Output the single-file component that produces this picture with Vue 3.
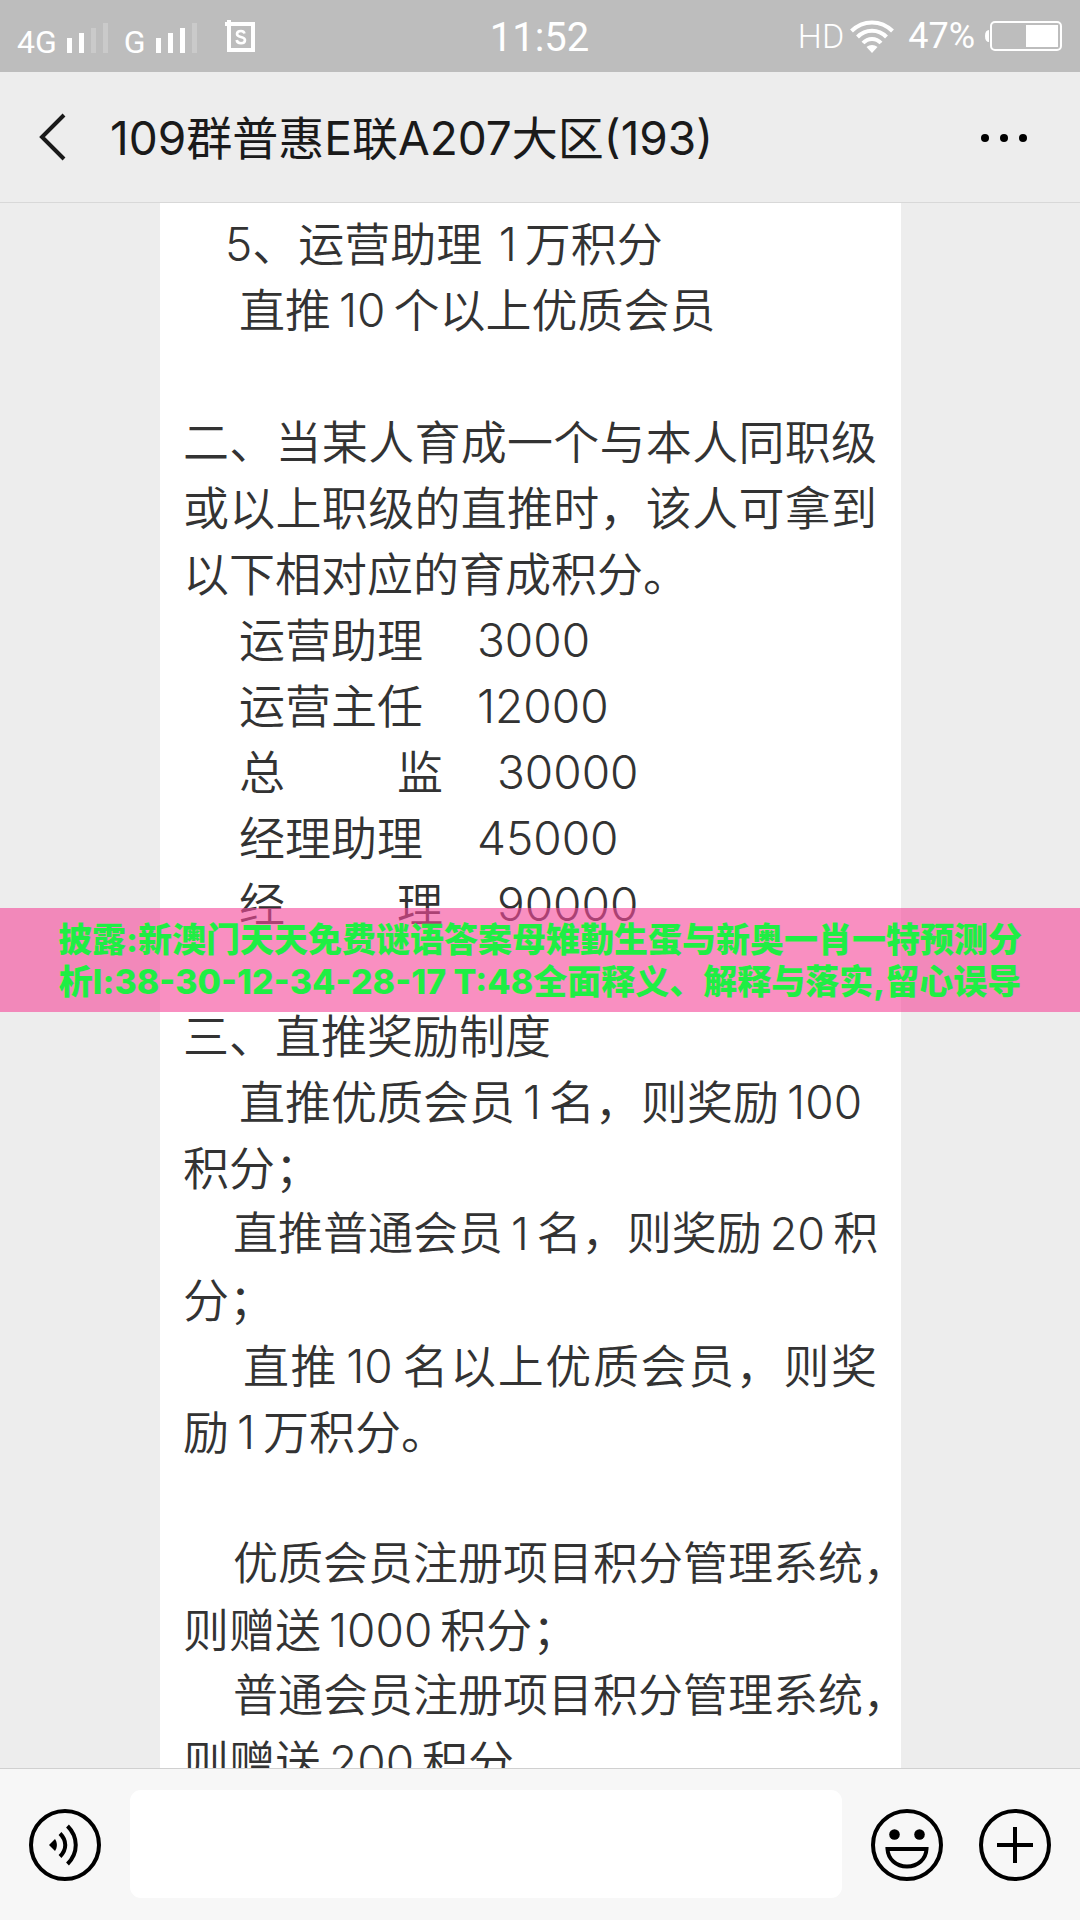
<script setup>
import { ref } from 'vue'

const message = ref('')

// full: 两端对齐的整行；tight: 字号略小的行
const intro = [
  { text: '5、运营助理\u20091万积分', indent: 'indent-1' },
  { text: '直推10个以上优质会员', indent: 'indent-3' },
  { text: '' },
  { text: '二、当某人育成一个与本人同职级', full: true },
  { text: '或以上职级的直推时，该人可拿到', full: true },
  { text: '以下相对应的育成积分。' }
]

const roles = [
  { name: ['运营助理'], score: 3000 },
  { name: ['运营主任'], score: 12000 },
  { name: ['总', '监'], score: 30000 },
  { name: ['经理助理'], score: 45000 },
  { name: ['经', '理'], score: 90000 }
]

const rules = [
  { text: '' },
  { text: '三、直推奖励制度' },
  { text: '直推优质会员1名，则奖励100', indent: 'indent-3' },
  { text: '积分；' },
  { text: '直推普通会员1名，则奖励20积', indent: 'indent-2', full: true, tight: true },
  { text: '分；' },
  { text: '直推10名以上优质会员，则奖', indent: 'indent-4', full: true },
  { text: '励1万积分。' },
  { text: '' },
  { text: '优质会员注册项目积分管理系统，', indent: 'indent-2', tight: true },
  { text: '则赠送1000积分；' },
  { text: '普通会员注册项目积分管理系统，', indent: 'indent-2', tight: true },
  { text: '则赠送200积分。' }
]

// 把数字拆出来，和汉字之间留一点空隙
const split = (text) => text.split(/(\d+)/).filter(Boolean)
const isNum = (part) => /^\d+$/.test(part)
const lineClass = (line) => [line.indent, { full: line.full, tight: line.tight }]
</script>

<template>
  <div class="phone">
    <div class="status">
      <div class="status-left">
        <span class="net">4G</span>
        <svg class="bars" width="41" height="30" viewBox="0 0 41 30" fill="#fff">
          <rect x="0" y="15" width="5" height="15" />
          <rect x="12" y="10" width="5" height="20" />
          <rect x="24" y="5" width="5" height="25" opacity=".2" />
          <rect x="36" y="0" width="5" height="30" opacity=".2" />
        </svg>
        <span class="net">G</span>
        <svg class="bars" width="41" height="30" viewBox="0 0 41 30" fill="#fff">
          <rect x="0" y="15" width="5" height="15" />
          <rect x="12" y="10" width="5" height="20" />
          <rect x="24" y="5" width="5" height="25" />
          <rect x="36" y="0" width="5" height="30" opacity=".2" />
        </svg>
        <svg class="shot" width="30" height="33" viewBox="0 0 30 33" fill="none" stroke="#fff">
          <path d="M4 4h24v26H4z" stroke-width="4" />
          <path d="M0 4h4M4 0v4" stroke-width="4" />
          <path d="M19.500 13.500C19 11.500 17.500 11 16 11c-2.500 0-4 1.200-4 3 0 4 8 1.800 8 6 0 2-1.800 3.200-4 3.200s-4-1-4.300-3.200" stroke-width="2.600" />
        </svg>
      </div>
      <div class="clock">11:52</div>
      <div class="status-right">
        <span class="hd">HD</span>
        <svg class="wifi" width="44" height="33" viewBox="0 0 44 33" fill="none" stroke="#fff" stroke-width="4">
          <path d="M1.500 11C13-.5 31-.5 42.500 11" />
          <path d="M7.500 17c8-8.300 21-8.300 29 0" />
          <path d="M13 23c5-5.500 13-5.500 18 0" />
          <path d="M22 33l-5.500-6c3-2.800 8-2.800 11 0z" fill="#fff" stroke="none" />
        </svg>
        <span class="percent">47%</span>
        <svg class="battery" width="77" height="30" viewBox="0 0 77 30">
          <path d="M4 9C1.500 9 0 11 0 15s1.500 6 4 6z" fill="#fff" />
          <rect x="6" y="1" width="70" height="28" rx="4" fill="none" stroke="#fff" stroke-width="2" />
          <rect x="41" y="4" width="32" height="22" fill="#fff" />
        </svg>
      </div>
    </div>

    <header class="header">
      <button class="icon-btn back" aria-label="返回">
        <svg width="28" height="48" viewBox="0 0 28 48" fill="none" stroke="#1a1a1a" stroke-width="4">
          <path d="M26 2L4 24l22 22" />
        </svg>
      </button>
      <h1 class="title">109群普惠E联A207大区(193)</h1>
      <button class="icon-btn" aria-label="更多">
        <svg width="48" height="10" viewBox="0 0 48 10">
          <circle cx="5" cy="6" r="4" />
          <circle cx="24" cy="6" r="4" />
          <circle cx="43" cy="6" r="4" />
        </svg>
      </button>
    </header>

    <main class="chat">
      <article class="paper">
        <p v-for="(line, i) in intro" :key="'a' + i" class="line" :class="lineClass(line)">
          <span v-for="(part, j) in split(line.text)" :key="j" :class="{ num: isNum(part) && j > 0 }">{{ part }}</span>
        </p>
        <p v-for="(role, i) in roles" :key="'b' + i" class="line role">
          <span class="role-name" :class="{ spread: role.name.length > 1 }">
            <span v-for="word in role.name" :key="word">{{ word }}</span>
          </span>
          <span>{{ role.score }}</span>
        </p>
        <p v-for="(line, i) in rules" :key="'c' + i" class="line" :class="lineClass(line)">
          <span v-for="(part, j) in split(line.text)" :key="j" :class="{ num: isNum(part) }">{{ part }}</span>
        </p>
      </article>
      <div class="banner">
        披露:新澳门天天免费谜语答案母雉勤生蛋与新奥一肖一特预测分<br />
        析l:38-30-12-34-28-17 T:48全面释义、解释与落实,留心误导
      </div>
    </main>

    <footer class="footer">
      <button class="icon-btn" aria-label="语音">
        <svg width="72" height="74" viewBox="0 0 72 74" fill="none" stroke="#000" stroke-width="4">
          <circle cx="36" cy="38" r="34" />
          <path d="M20 38l6-6c2.500 3.500 2.500 8.500 0 12z" fill="#000" stroke="none" />
          <path d="M31 26.500c7 7 7 16 0 23M38.500 19c11 11 11 27 0 38" />
        </svg>
      </button>
      <input v-model="message" class="field" type="text" aria-label="消息" />
      <button class="icon-btn" aria-label="表情">
        <svg width="72" height="74" viewBox="0 0 72 74" fill="none" stroke="#000" stroke-width="4">
          <circle cx="36" cy="38" r="34" />
          <circle cx="23.500" cy="27.500" r="5.300" fill="#000" stroke="none" />
          <circle cx="48.500" cy="27.500" r="5.300" fill="#000" stroke="none" />
          <path d="M16.500 42h39C55 52 47 59.500 36 59.500S17 52 16.500 42z" />
        </svg>
      </button>
      <button class="icon-btn plus" aria-label="添加">
        <svg width="72" height="74" viewBox="0 0 72 74" fill="none" stroke="#000" stroke-width="4">
          <circle cx="36" cy="38" r="34" />
          <path d="M18 38h36M36 20v36" />
        </svg>
      </button>
    </footer>
  </div>
</template>

<style>
body {
  margin: 0;
}
</style>

<style scoped>
.phone {
  display: flex;
  flex-direction: column;
  height: 100vh;
  overflow: hidden;
  background: #ededed;
  font-family: Inter, 'Noto Sans CJK SC', sans-serif;
}
svg {
  display: block;
}
.icon-btn {
  padding: 0;
  border: none;
  background: none;
  flex: none;
}

/* 状态栏 */
.status {
  display: flex;
  height: 72px;
  flex: none;
  background: #bdbdbd;
  color: #fff;
  font-family: Roboto, sans-serif;
}
.status-left,
.status-right {
  flex: 1;
  display: flex;
}
.status-left {
  align-items: flex-end;
  padding: 0 0 19px 17px;
}
.net {
  font-size: 32px;
  line-height: 22px;
}
.bars {
  margin: 0 16px 0 10px;
}
.shot {
  margin-left: 12px;
}
.clock {
  font-size: 40px;
  line-height: 76px;
}
.status-right {
  align-items: center;
  justify-content: flex-end;
  padding-right: 18px;
}
.hd {
  font-size: 34px;
  font-weight: 300;
}
.wifi {
  margin: 0 14px 0 6px;
}
.percent {
  font-size: 36px;
}
.battery {
  margin-left: 10px;
}

/* 标题栏 */
.header {
  display: flex;
  align-items: center;
  height: 130px;
  flex: none;
  padding: 0 52px 0 38px;
  border-bottom: 1px solid #d8d8d8;
}
.back {
  margin-right: 44px;
}
.title {
  flex: 1;
  margin: 0;
  padding-bottom: 4px;
  font-size: 46px;
  font-weight: 400;
  color: #1a1a1a;
  white-space: nowrap;
}

/* 聊天内容 */
.chat {
  position: relative;
  flex: 1;
  min-height: 0;
  overflow: hidden;
}
.paper {
  margin: 0 179px 0 160px;
  padding: 8px 24px 8px 23px;
  background: #fff;
  color: #333;
  font-size: 46px;
  font-weight: 350;
  line-height: 66px;
}
.line {
  height: 66px;
  margin: 0;
  white-space: pre;
}
.full {
  text-align-last: justify;
}
.tight {
  font-size: 45px;
}
.num {
  margin: 0 8px;
}
.indent-1 {
  padding-left: 42px;
}
.indent-2 {
  padding-left: 50px;
}
.indent-3 {
  padding-left: 56px;
}
.indent-4 {
  padding-left: 60px;
}
.role {
  display: flex;
  gap: 54px;
  padding-left: 56px;
}
.role-name {
  display: flex;
  justify-content: space-between;
}
.spread {
  width: 204px;
}
.banner {
  position: absolute;
  top: 705px;
  left: 0;
  right: 0;
  padding: 11px 0 9px;
  background: rgba(245, 74, 155, 0.62);
  color: #1fee44;
  font-size: 34px;
  font-weight: 800;
  line-height: 42px;
  text-align: center;
  white-space: nowrap;
}

/* 输入栏 */
.footer {
  display: flex;
  align-items: center;
  gap: 29px;
  flex: none;
  padding: 21px 29px 22px;
  border-top: 1px solid #d0d0d0;
  background: #f7f7f7;
}
.field {
  flex: 1;
  min-width: 0;
  height: 108px;
  box-sizing: border-box;
  padding: 0 24px;
  border: none;
  border-radius: 11px;
  outline: none;
  background: #fff;
  font-size: 46px;
}
.plus {
  margin-left: 7px;
}
</style>
